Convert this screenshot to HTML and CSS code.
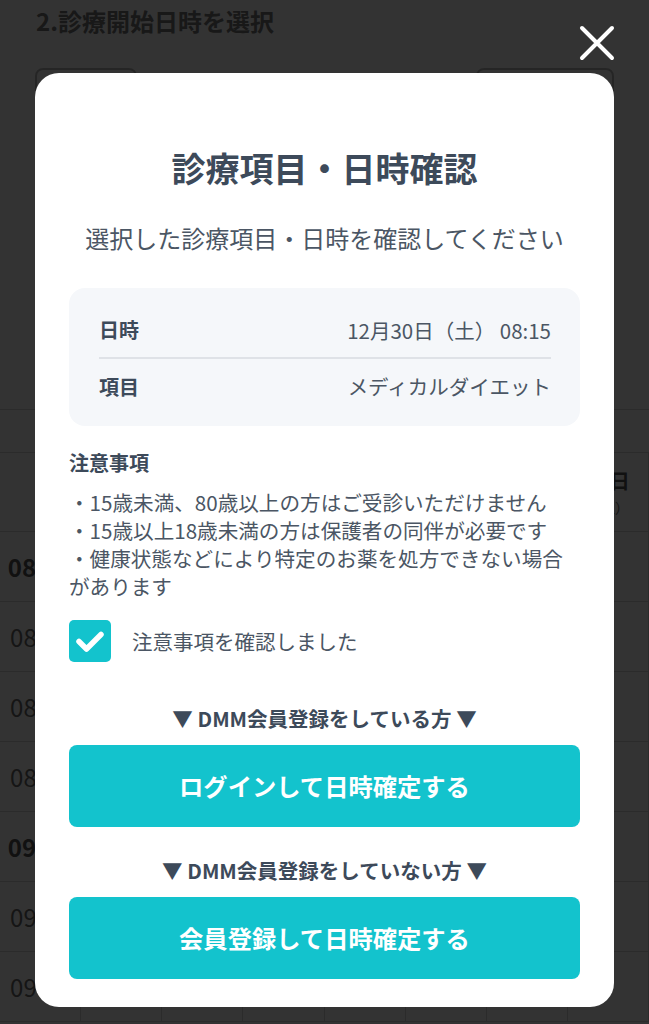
FILE: index.html
```html
<!DOCTYPE html>
<html lang="ja">
<head>
    <meta charset="UTF-8">
    <title>診療開始日時を選択</title>
    <link rel="stylesheet" href="styles.css">
</head>
<body>

    <!-- 背景のページ -->
    <div class="page">
        <h2 class="page-title">2.診療開始日時を選択</h2>
        <div class="toolbar">
            <a href="#" class="tool-btn">前の週</a>
            <a href="#" class="tool-btn tool-btn-wide">次の週</a>
        </div>

        <div class="calendar">
            <div class="cal-month">2023年12月</div>
            <div class="cal-row cal-head">
                <div class="cal-cell"></div>
                <div class="cal-cell"><b>24日</b><span>（日）</span></div>
                <div class="cal-cell"><b>25日</b><span>（月）</span></div>
                <div class="cal-cell"><b>26日</b><span>（火）</span></div>
                <div class="cal-cell"><b>27日</b><span>（水）</span></div>
                <div class="cal-cell"><b>28日</b><span>（木）</span></div>
                <div class="cal-cell"><b>29日</b><span>（金）</span></div>
                <div class="cal-cell"><b>30日</b><span>（土）</span></div>
            </div>
            <div class="cal-row"><div class="cal-cell time strong">08:00</div><div class="cal-cell"></div><div class="cal-cell"></div><div class="cal-cell"></div><div class="cal-cell"></div><div class="cal-cell"></div><div class="cal-cell"></div><div class="cal-cell"></div></div>
            <div class="cal-row"><div class="cal-cell time">08:15</div><div class="cal-cell"></div><div class="cal-cell"></div><div class="cal-cell"></div><div class="cal-cell"></div><div class="cal-cell"></div><div class="cal-cell"></div><div class="cal-cell"></div></div>
            <div class="cal-row"><div class="cal-cell time">08:30</div><div class="cal-cell"></div><div class="cal-cell"></div><div class="cal-cell"></div><div class="cal-cell"></div><div class="cal-cell"></div><div class="cal-cell"></div><div class="cal-cell"></div></div>
            <div class="cal-row"><div class="cal-cell time">08:45</div><div class="cal-cell"></div><div class="cal-cell"></div><div class="cal-cell"></div><div class="cal-cell"></div><div class="cal-cell"></div><div class="cal-cell"></div><div class="cal-cell"></div></div>
            <div class="cal-row"><div class="cal-cell time strong">09:00</div><div class="cal-cell"></div><div class="cal-cell"></div><div class="cal-cell"></div><div class="cal-cell"></div><div class="cal-cell"></div><div class="cal-cell"></div><div class="cal-cell"></div></div>
            <div class="cal-row"><div class="cal-cell time">09:15</div><div class="cal-cell"></div><div class="cal-cell"></div><div class="cal-cell"></div><div class="cal-cell"></div><div class="cal-cell"></div><div class="cal-cell"></div><div class="cal-cell"></div></div>
            <div class="cal-row"><div class="cal-cell time">09:30</div><div class="cal-cell"></div><div class="cal-cell"></div><div class="cal-cell"></div><div class="cal-cell"></div><div class="cal-cell"></div><div class="cal-cell"></div><div class="cal-cell"></div></div>
        </div>
    </div>

    <!-- モーダル -->
    <div class="overlay"></div>

    <a href="#" class="close-btn" aria-label="閉じる">
        <svg width="36" height="36" viewBox="0 0 36 36">
            <path d="M3 3 L33 33 M33 3 L3 33" stroke="#fff" stroke-width="4" stroke-linecap="round" fill="none"/>
        </svg>
    </a>

    <div class="modal">
        <h1 class="modal-title">診療項目・日時確認</h1>
        <p class="modal-lead">選択した診療項目・日時を確認してください</p>

        <dl class="summary">
            <div class="summary-row">
                <dt>日時</dt>
                <dd>12月30日（土） 08:15</dd>
            </div>
            <div class="summary-row">
                <dt>項目</dt>
                <dd>メディカルダイエット</dd>
            </div>
        </dl>

        <h3 class="notes-title">注意事項</h3>
        <ul class="notes">
            <li>・15歳未満、80歳以上の方はご受診いただけません</li>
            <li>・15歳以上18歳未満の方は保護者の同伴が必要です</li>
            <li>・健康状態などにより特定のお薬を処方できない場合があります</li>
        </ul>

        <label class="agree">
            <span class="checkbox">
                <svg width="42" height="42" viewBox="0 0 42 42">
                    <path d="M10 21.5 L17.5 29 L32 14.5" stroke="#fff" stroke-width="5.5" stroke-linecap="round" stroke-linejoin="round" fill="none"/>
                </svg>
            </span>
            注意事項を確認しました
        </label>

        <p class="cta-label">▼ DMM会員登録をしている方 ▼</p>
        <a href="#" class="cta">ログインして日時確定する</a>

        <p class="cta-label cta-label-2">▼ DMM会員登録をしていない方 ▼</p>
        <a href="#" class="cta">会員登録して日時確定する</a>
    </div>

</body>
</html>
```

FILE: styles.css
```css
* {
    padding: 0;
    margin: 0;
    list-style: none;
    box-sizing: border-box;
}
body {
    width: 649px;
    height: 1024px;
    overflow: hidden;
    background-color: #fff;
    font-family: "Noto Sans CJK JP", "Noto Sans", sans-serif;
    color: #6a6a6a;
}
a {
    text-decoration: none;
}

/* 背景のページ */
.page-title {
    padding: 5px 36px 0;
    font-size: 24px;
    line-height: 32px;
    font-weight: bold;
    color: #777;
}
.toolbar {
    display: flex;
    justify-content: space-between;
    padding: 0 35px;
    margin-top: 31px;
}
.tool-btn {
    width: 102px;
    height: 44px;
    border: 2px solid #bbb;
    border-radius: 8px;
    line-height: 40px;
    text-align: center;
    color: #777;
}
.tool-btn-wide {
    width: 138px;
}
.calendar {
    margin-top: 297px;
    border-top: 1px solid #d7d7d7;
}
.cal-month {
    height: 43px;
    line-height: 43px;
    text-align: center;
    font-size: 18px;
    border-bottom: 1px solid #d7d7d7;
}
.cal-row {
    display: grid;
    grid-template-columns: repeat(8, 1fr);
    height: 70px;
    border-bottom: 1px solid #d7d7d7;
}
.cal-head {
    height: 79px;
}
.cal-cell {
    border-right: 1px solid #d7d7d7;
    display: flex;
    flex-direction: column;
    align-items: center;
    justify-content: center;
    font-size: 24px;
}
.cal-cell b {
    display: block;
    font-size: 20px;
    line-height: 30px;
    color: #555;
}
.cal-cell span {
    display: block;
    font-size: 14px;
    line-height: 22px;
}
.time {
    color: #6a6a6a;
}
.strong {
    font-weight: bold;
    color: #555;
}

/* モーダル */
.overlay {
    position: fixed;
    left: 0;
    top: 0;
    right: 0;
    bottom: 0;
    background-color: rgba(0, 0, 0, 0.8);
}
.close-btn {
    position: fixed;
    left: 579px;
    top: 25px;
}
.modal {
    position: fixed;
    left: 35px;
    top: 73px;
    width: 579px;
    padding: 71px 34px 28px;
    background-color: #fff;
    border-radius: 24px;
    color: #4b5664;
}
.modal-title {
    font-size: 34px;
    line-height: 48px;
    font-weight: bold;
    text-align: center;
    color: #3d4a5a;
}
.modal-lead {
    margin-top: 30px;
    font-size: 24px;
    line-height: 32px;
    text-align: center;
}
.summary {
    margin-top: 34px;
    padding: 14px 29px 13px 30px;
    background-color: #f5f7fa;
    border-radius: 16px;
}
.summary-row {
    display: flex;
    justify-content: space-between;
    align-items: center;
    height: 55px;
    font-size: 20.5px;
}
.summary-row + .summary-row {
    border-top: 2px solid #dfe2e7;
    height: 56px;
}
.summary-row dt {
    font-size: 20px;
    font-weight: bold;
    color: #3d4a5a;
}
.notes-title {
    margin-top: 23px;
    font-size: 20px;
    line-height: 28px;
    font-weight: bold;
    color: #3d4a5a;
}
.notes {
    margin-top: 11px;
    font-size: 20.6px;
    line-height: 28px;
}
.agree {
    display: flex;
    align-items: center;
    margin-top: 20px;
    font-size: 20.5px;
    cursor: pointer;
}
.checkbox {
    width: 42px;
    height: 42px;
    margin-right: 21px;
    background-color: #13c3cd;
    border-radius: 5px;
}
.checkbox svg {
    display: block;
}
.cta-label {
    margin-top: 42px;
    font-size: 20.5px;
    line-height: 28px;
    font-weight: bold;
    text-align: center;
    color: #3d4a5a;
}
.cta-label-2 {
    margin-top: 29px;
}
.cta {
    display: block;
    margin-top: 13px;
    height: 82px;
    line-height: 82px;
    background-color: #13c3cd;
    border-radius: 8px;
    text-align: center;
    font-size: 24.3px;
    font-weight: bold;
    color: #fff;
}
```
